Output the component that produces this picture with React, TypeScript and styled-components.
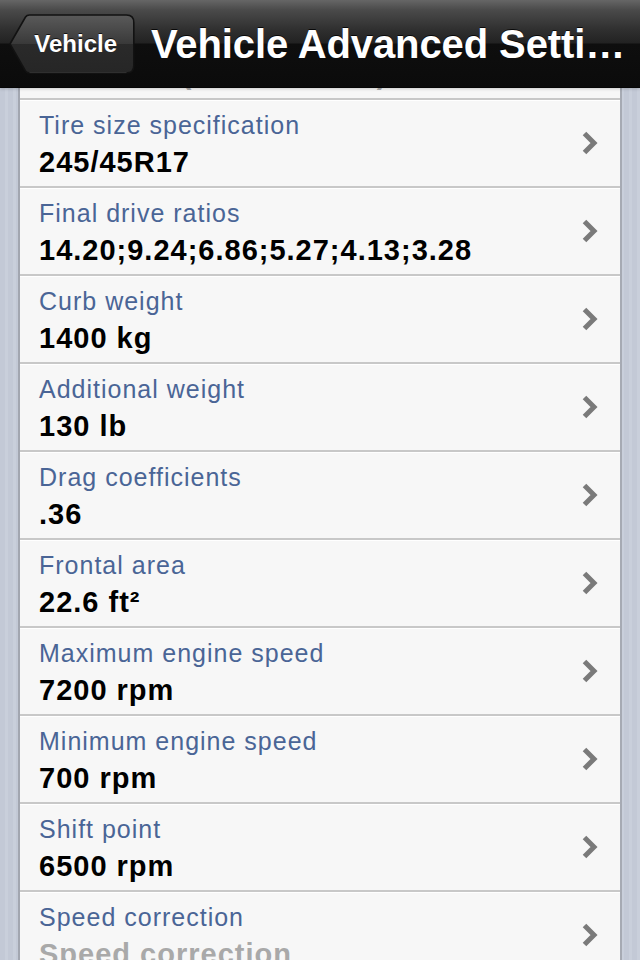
import React from 'react';
import styled, { createGlobalStyle } from 'styled-components';

const GlobalStyle = createGlobalStyle`
  html, body {
    margin: 0;
    padding: 0;
    width: 640px;
    height: 960px;
    overflow: hidden;
    background: #c6ccd8;
    font-family: "Liberation Sans", Arial, Helvetica, sans-serif;
  }
  #root { height: 960px; }
`;

const Page = styled.div`
  width: 640px;
  height: 960px;
  display: flex;
  flex-direction: column;
  overflow: hidden;
  background: repeating-linear-gradient(
    90deg,
    #c3c9d6 0px,
    #c3c9d6 5px,
    #c9cfdb 5px,
    #c9cfdb 8px
  );
`;

const NavBar = styled.header`
  position: relative;
  z-index: 2;
  flex: 0 0 88px;
  height: 88px;
  display: flex;
  align-items: center;
  gap: 16px;
  padding-left: 8px;
  box-sizing: border-box;
  background: linear-gradient(
    #666666 0px,
    #4a4a4a 10px,
    #2f2f2f 30px,
    #222222 43px,
    #0e0e0e 44px,
    #0b0b0b 87px,
    #000000 88px
  );
  box-shadow: 0 1px 3px rgba(0, 0, 0, 0.18);
`;

const BackButton = styled.button`
  position: relative;
  flex: 0 0 auto;
  width: 127px;
  height: 60px;
  padding: 0 18px 0 26px;
  border: none;
  background: transparent;
  display: flex;
  align-items: center;
  justify-content: flex-end;
  color: #ffffff;
  font-family: "Liberation Sans", Arial, sans-serif;
  font-weight: bold;
  font-size: 24px;
  text-shadow: 0 -1px 0 rgba(0, 0, 0, 0.7);
  cursor: pointer;
`;

const ButtonShape = styled.svg`
  position: absolute;
  inset: 0;
  z-index: 0;
`;

const ButtonLabel = styled.span`
  position: relative;
  z-index: 1;
  line-height: 1;
`;

const Title = styled.h1`
  margin: 0;
  flex: 1 1 auto;
  min-width: 0;
  white-space: nowrap;
  overflow: hidden;
  color: #ffffff;
  font-family: "Liberation Sans", Arial, sans-serif;
  font-weight: bold;
  font-size: 40px;
  letter-spacing: -0.1px;
  line-height: 48px;
  text-shadow: 0 -1px 0 rgba(0, 0, 0, 0.8);
`;

const Scroller = styled.main`
  flex: 1 1 auto;
  overflow: hidden;
`;

const Card = styled.section`
  margin: -76px 18px 0 18px;
  border-left: 2px solid #a2a6b0;
  border-right: 2px solid #a6aab3;
  background: #f7f7f7;
`;

const Row = styled.div`
  height: 88px;
  box-sizing: border-box;
  display: flex;
  align-items: flex-start;
  padding: 0 21px 0 19px;
  border-bottom: 2px solid #c8c8c8;
  box-shadow: inset 0 1px 0 #ffffff;
  background: #f7f7f7;
`;

const Texts = styled.div`
  flex: 1 1 auto;
  min-width: 0;
  display: flex;
  flex-direction: column;
  padding-top: 9.5px;
`;

const Label = styled.div`
  font-size: 25px;
  letter-spacing: 1px;
  line-height: 30px;
  color: #4a6596;
  white-space: nowrap;
`;

const Value = styled.div<{ $placeholder?: boolean }>`
  margin-top: 5px;
  font-size: 29px;
  font-weight: bold;
  letter-spacing: 1px;
  line-height: 34px;
  color: ${(p) => (p.$placeholder ? '#a9a9a9' : '#000000')};
  white-space: nowrap;
`;

const Chevron = styled.svg`
  flex: 0 0 18px;
  align-self: center;
`;

type Item = { label: string; value: string; placeholder?: boolean };

const rows: Item[] = [
  { label: 'Vehicle type', value: 'Standard (Not selected)', placeholder: true },
  { label: 'Tire size specification', value: '245/45R17' },
  { label: 'Final drive ratios', value: '14.20;9.24;6.86;5.27;4.13;3.28' },
  { label: 'Curb weight', value: '1400 kg' },
  { label: 'Additional weight', value: '130 lb' },
  { label: 'Drag coefficients', value: '.36' },
  { label: 'Frontal area', value: '22.6 ft²' },
  { label: 'Maximum engine speed', value: '7200 rpm' },
  { label: 'Minimum engine speed', value: '700 rpm' },
  { label: 'Shift point', value: '6500 rpm' },
  { label: 'Speed correction', value: 'Speed correction', placeholder: true },
];

const Disclosure = () => (
  <Chevron width="18" height="26" viewBox="0 0 18 26" aria-hidden="true">
    <path
      d="M3.5 3.5 L13 13 L3.5 22.5"
      fill="none"
      stroke="#7a7a7a"
      strokeWidth="5"
      strokeLinejoin="miter"
      strokeMiterlimit="2"
    />
  </Chevron>
);

export default function App() {
  return (
    <>
      <GlobalStyle />
      <Page>
        <NavBar>
          <BackButton>
            <ButtonShape width="127" height="60" viewBox="0 0 127 60">
              <defs>
                <linearGradient id="backFill" x1="0" y1="0" x2="0" y2="1">
                  <stop offset="0" stopColor="#5a5a5a" />
                  <stop offset="0.5" stopColor="#393939" />
                  <stop offset="0.5" stopColor="#2a2a2a" />
                  <stop offset="1" stopColor="#262626" />
                </linearGradient>
              </defs>
              <path
                d="M2 30 L17.5 3 Q18.8 1 21.5 1 H118.5 Q125.8 1 125.8 8.5 V51.5 Q125.8 59 118.5 59 H21.5 Q18.8 59 17.5 57 Z"
                fill="url(#backFill)"
                stroke="#121212"
                strokeWidth="1.6"
              />
              <path
                d="M21.5 58.6 H118.5"
                stroke="rgba(255,255,255,0.12)"
                strokeWidth="1"
              />
            </ButtonShape>
            <ButtonLabel>Vehicle</ButtonLabel>
          </BackButton>
          <Title>Vehicle Advanced Setti…</Title>
        </NavBar>
        <Scroller>
          <Card>
            {rows.map((r) => (
              <Row key={r.label}>
                <Texts>
                  <Label>{r.label}</Label>
                  <Value $placeholder={r.placeholder}>{r.value}</Value>
                </Texts>
                <Disclosure />
              </Row>
            ))}
          </Card>
        </Scroller>
      </Page>
    </>
  );
}
